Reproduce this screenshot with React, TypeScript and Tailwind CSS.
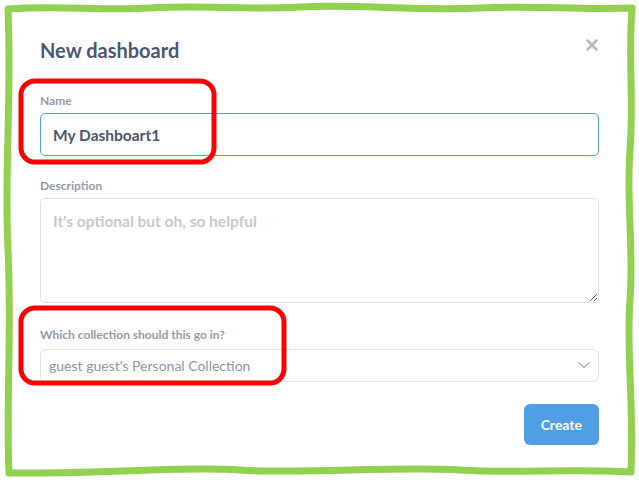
import React from "react";

export default function App() {
  return (
    <div className="relative w-[639px] h-[482px] overflow-hidden bg-white font-['Lato','Noto_Sans',sans-serif]">
      <div className="px-10 pt-[38px]">
        <div className="flex items-start justify-between">
          <h2 className="text-[20px] leading-6 font-bold text-[#4c5773]">New dashboard</h2>
          <button className="mt-[1px] mr-[1px] text-[#b4b9c4]">
            <svg width="12" height="12" viewBox="0 0 12 12" className="block">
              <path d="M1.5 1.5L10.5 10.5M10.5 1.5L1.5 10.5" stroke="currentColor" strokeWidth="2.6" strokeLinecap="round" />
            </svg>
          </button>
        </div>

        <label className="mt-[31px] block text-[12px] leading-4 font-bold text-[#949aab]">Name</label>
        <input
          readOnly
          value="My Dashboart1"
          className="mt-1 block h-[43px] w-full rounded-[5px] border border-[#509ee3] pl-3 text-[15.5px] font-bold text-[#4c5773] outline-none"
        />

        <label className="mt-[22px] block text-[12px] leading-4 font-bold text-[#949aab]">Description</label>
        <textarea
          placeholder="It's optional but oh, so helpful"
          className="mt-1 block h-[105px] w-full rounded-[5px] border border-[#dfe1e5] px-3 pt-[12px] text-[15.5px] leading-5 font-bold text-[#4c5773] outline-none placeholder:text-[#c5c9d1]"
        />

        <label className="mt-6 block text-[12px] leading-4 font-bold text-[#949aab]">Which collection should this go in?</label>
        <div className="mt-[6px] flex h-[33px] items-center justify-between rounded-[6px] border border-[#dfe1e5] pl-2 pr-2">
          <span className="text-[14px] text-[#8e96a9]">guest guest's Personal Collection</span>
          <svg width="12" height="7" viewBox="0 0 12 7" className="block">
            <path d="M1 1L6 5.5L11 1" fill="none" stroke="#b0b6c0" strokeWidth="1.6" strokeLinecap="round" strokeLinejoin="round" />
          </svg>
        </div>

        <div className="mt-[22px] flex justify-end">
          <button className="h-[41px] rounded-[6px] bg-[#509ee3] px-[17px] text-[14px] font-bold text-white">Create</button>
        </div>
      </div>

      {/* hand-drawn frame and annotations */}
      <svg className="pointer-events-none absolute inset-0" width="639" height="482" viewBox="0 0 639 482">
        <path
          d="M8 9 C 60 5 100 11 150 8 S 250 10 300 7 S 420 11 480 8 S 570 10 632 8 C 628 60 634 100 630 150 S 634 250 630 300 S 634 400 631 472 C 560 468 520 474 460 470 S 300 474 240 470 S 120 474 9 473 C 6 400 12 330 8 250 S 12 100 8 9 Z"
          fill="none"
          stroke="#92d050"
          strokeWidth="7"
          strokeLinejoin="round"
        />
        <rect x="21" y="81" width="193" height="81" rx="14" fill="none" stroke="#ff0000" strokeWidth="5" />
        <rect x="21" y="308" width="263" height="75" rx="14" fill="none" stroke="#ff0000" strokeWidth="5" />
      </svg>
    </div>
  );
}
